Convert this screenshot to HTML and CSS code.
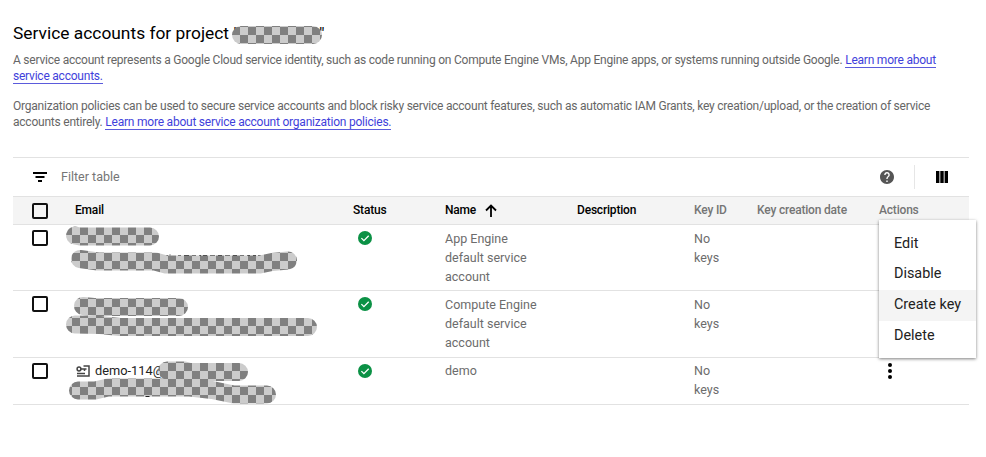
FILE: index.html
```html
<!DOCTYPE html>
<html lang="en">
<head>
<meta charset="utf-8">
<title>Service accounts</title>
<link rel="stylesheet" href="styles.css">
</head>
<body>
<main class="page">
  <h1 class="title">Service accounts for project <span class="project">"<span class="hidden-name"></span>"</span></h1>
  <p class="intro">A service account represents a Google Cloud service identity, such as code running on Compute Engine VMs, App Engine apps, or systems running outside Google. <a class="link">Learn more about<br>service accounts.</a></p>
  <p class="intro">Organization policies can be used to secure service accounts and block risky service account features, such as automatic IAM Grants, key creation/upload, or the creation of service<br>accounts entirely. <a class="link">Learn more about service account organization policies.</a></p>

  <section class="table">
    <div class="toolbar">
      <svg class="filter-icon" viewBox="0 0 14 10"><path d="M0 1h14M2.500 5h9M5 9h4" stroke="#000" stroke-width="1.800"/></svg>
      <span class="filter-text">Filter table</span>
      <svg class="help-icon" viewBox="2 2 20 20"><path fill="#555" d="M12 2C6.480 2 2 6.480 2 12s4.480 10 10 10 10-4.480 10-10S17.520 2 12 2zm1 17h-2v-2h2v2zm2.070-7.750l-.9.920C13.450 12.900 13 13.500 13 15h-2v-.5c0-1.100.45-2.100 1.170-2.830l1.240-1.260c.37-.36.590-.86.590-1.410 0-1.100-.9-2-2-2s-2 .9-2 2H8c0-2.210 1.790-4 4-4s4 1.790 4 4c0 .88-.36 1.680-.93 2.250z"/></svg>
      <span class="divider"></span>
      <svg class="columns-icon" viewBox="0 0 12 12"><path d="M0 0h3.400v12H0zM4.300 0h3.400v12h-3.400zM8.600 0H12v12H8.600z"/></svg>
    </div>
    <div class="row head">
      <span class="check"></span><span>Email</span><span>Status</span>
      <span class="sorted">Name<svg class="arrow" viewBox="0 0 12 13"><path d="M6 13V1.500M1 6.500l5-5 5 5" fill="none" stroke="#000" stroke-width="1.800"/></svg></span>
      <span>Description</span><span class="muted">Key ID</span><span class="muted">Key creation date</span><span class="muted">Actions</span>
    </div>
    <div class="row">
      <span class="check"></span><span></span>
      <span><svg class="ok" viewBox="0 0 14 14"><circle cx="7" cy="7" r="7" fill="#0b9145"/><path d="M3.400 7.100l2.500 2.500 4.800-4.900" fill="none" stroke="#fff" stroke-width="1.300"/></svg></span>
      <span>App Engine<br>default service<br>account</span><span></span><span>No<br>keys</span><span></span><span></span>
    </div>
    <div class="row">
      <span class="check"></span><span></span>
      <span><svg class="ok" viewBox="0 0 14 14"><circle cx="7" cy="7" r="7" fill="#0b9145"/><path d="M3.400 7.100l2.500 2.500 4.800-4.900" fill="none" stroke="#fff" stroke-width="1.300"/></svg></span>
      <span>Compute Engine<br>default service<br>account</span><span></span><span>No<br>keys</span><span></span><span></span>
    </div>
    <div class="row last">
      <span class="check"></span>
      <span class="email"><svg class="account" viewBox="0 0 14 12"><path d="M1 11h12V1H7.500M1 8.500h8M5 4h5.500M8.500 4v2" fill="none" stroke="#444" stroke-width="1.500"/><circle cx="3" cy="4" r="1.900" fill="none" stroke="#444" stroke-width="1.500"/></svg>demo-114@</span>
      <span><svg class="ok" viewBox="0 0 14 14"><circle cx="7" cy="7" r="7" fill="#0b9145"/><path d="M3.400 7.100l2.500 2.500 4.800-4.900" fill="none" stroke="#fff" stroke-width="1.300"/></svg></span>
      <span>demo</span><span></span><span>No<br>keys</span><span></span>
      <span><svg class="more" viewBox="0 0 4 16"><circle cx="2" cy="2" r="2"/><circle cx="2" cy="8" r="2"/><circle cx="2" cy="14" r="2"/></svg></span>
    </div>
  </section>
</main>

<svg class="masks" viewBox="0 0 986 457">
  <defs>
    <pattern id="a" x="88" y="27" width="16" height="16" patternUnits="userSpaceOnUse"><path fill="#ccc" d="M0 0h16v16H0z"/><path fill="#808080" d="M0 0h8v8H0zM8 8h8v8H8z"/></pattern>
    <pattern id="b" x="72" y="253" width="16" height="16" patternUnits="userSpaceOnUse"><path fill="#ccc" d="M0 0h16v16H0z"/><path fill="#808080" d="M0 0h8v8H0zM8 8h8v8H8z"/></pattern>
    <pattern id="c" x="80" y="299" width="16" height="16" patternUnits="userSpaceOnUse"><path fill="#ccc" d="M0 0h16v16H0z"/><path fill="#808080" d="M0 0h8v8H0zM8 8h8v8H8z"/></pattern>
    <pattern id="d" x="72" y="318" width="16" height="16" patternUnits="userSpaceOnUse"><path fill="#ccc" d="M0 0h16v16H0z"/><path fill="#808080" d="M0 0h8v8H0zM8 8h8v8H8z"/></pattern>
    <pattern id="e" x="168" y="363" width="16" height="16" patternUnits="userSpaceOnUse"><path fill="#ccc" d="M0 0h16v16H0z"/><path fill="#808080" d="M0 0h8v8H0zM8 8h8v8H8z"/></pattern>
  </defs>
  <g class="marks">
    <path stroke="url(#a)" d="M241 35H313"/>
    <path stroke="url(#a)" d="M75 235.500L80 236.500H150"/>
    <path class="fragment" d="M165 255.500h3m2-1v1m8 0h3m3 0h5m3 0h4m3 0h2m2 0h4m3 0h5m3 0h4m3 0h5m3 0h4m3 0h4m3 0h3m3 0h3m2 0h3m3 0h3"/>
    <path stroke="url(#b)" d="M80 259L98 261.500H155L166 264.500H260L272 262L288 260.500"/>
    <path stroke="url(#c)" d="M83 306L94 307H179"/>
    <path stroke="url(#d)" d="M75 324.500L100 325L120 327H308"/>
    <path stroke="url(#e)" d="M167 370.500H185L190 372H239"/>
    <path stroke="url(#e)" d="M78 390.500H95L108 387.500H190L212 390L234 394.500H267"/>
    <path class="fragment" d="M145.500 396.500h4"/>
  </g>
</svg>

<nav class="menu">
  <span>Edit</span><span>Disable</span><span class="active">Create key</span><span>Delete</span>
</nav>
</body>
</html>
```
FILE: styles.css
```css
* { box-sizing: border-box; }
body {
  margin: 0;
  height: 457px;
  overflow: hidden;
  background: #fff;
  font-family: Roboto, sans-serif;
  position: relative;
}
.page { padding: 21px 17px 0 13px; }
.title {
  margin: 0 0 8px;
  font-size: 17.36px;
  line-height: 24px;
  font-weight: 400;
  color: #000;
  white-space: nowrap;
}
.project { display: inline-flex; }
.hidden-name { width: 80px; }
.intro {
  margin: 0 0 15px;
  font-size: 12px;
  letter-spacing: -0.222px;
  line-height: 15.5px;
  color: #666;
  white-space: nowrap;
}
.link { color: #3f3fdb; border-bottom: 1px solid #5b5bdc; }
.table { margin-top: 27px; border-top: 1px solid #e2e2e2; font-size: 12.5px; }
.toolbar { height: 38px; display: flex; align-items: center; padding: 0 21px 0 20px; }
.filter-icon { width: 14px; height: 10px; }
.filter-text { margin: -2px 0 0 14px; color: #757575; flex: 1; }
.help-icon { width: 14px; height: 14px; }
.divider { width: 1px; height: 24px; background: #e6e6e6; margin: 0 21px 0 20px; }
.columns-icon { width: 12px; height: 12px; }
.row {
  display: grid;
  grid-template-columns: 43px 278px 92px 132px 117px 63px 122px 1fr;
  padding: 4px 0 4px 19px;
  height: 66px;
  border-bottom: 1px solid #e2e2e2;
  line-height: 19px;
  color: #6c6c6c;
}
.row:nth-child(4) { height: 67px; }
.row.last { height: 47px; padding-top: 3px; }
.row.head {
  height: 29px;
  background: #f4f4f4;
  border-top: 1px solid #e2e2e2;
  font-size: 12px;
  letter-spacing: -0.19px;
  font-weight: 500;
  color: #000;
}
.head .muted { color: #757575; }
.check {
  width: 16px;
  height: 16px;
  margin-top: 1px;
  border: 2px solid #111;
  border-radius: 2px;
}
.head .check { margin-top: 2px; }
.last .check { margin-top: 2px; }
.sorted { display: flex; }
.arrow { width: 12px; height: 13px; margin: 3px 0 0 9px; }
.ok { display: block; width: 14px; height: 14px; margin: 2px 0 0 5px; }
.last .ok { margin-top: 3px; }
.email { color: #222; display: flex; font-size: 12.8px; }
.account { width: 14px; height: 12px; margin: 4px 5px 0 1px; }
.more { display: block; width: 4px; height: 16px; margin: 2px 0 0 9px; }
.masks { position: absolute; left: 0; top: 0; width: 986px; height: 457px; }
.marks { fill: none; stroke-width: 18; stroke-linecap: round; stroke-linejoin: round; }
.fragment { stroke: #222; stroke-width: 1; stroke-linecap: butt; }
.menu {
  position: absolute;
  left: 879px;
  top: 220px;
  width: 97px;
  height: 138px;
  padding: 8px 0;
  display: flex;
  flex-direction: column;
  background: #fff;
  box-shadow: 0 1px 3px rgba(0, 0, 0, .5);
  font-size: 14.4px;
  line-height: 30.7px;
  color: #222;
}
.menu span { height: 30.7px; padding-left: 15px; white-space: nowrap; }
.menu { padding-top: 8.5px; }
.menu .active { background: #f4f4f4; }
```
